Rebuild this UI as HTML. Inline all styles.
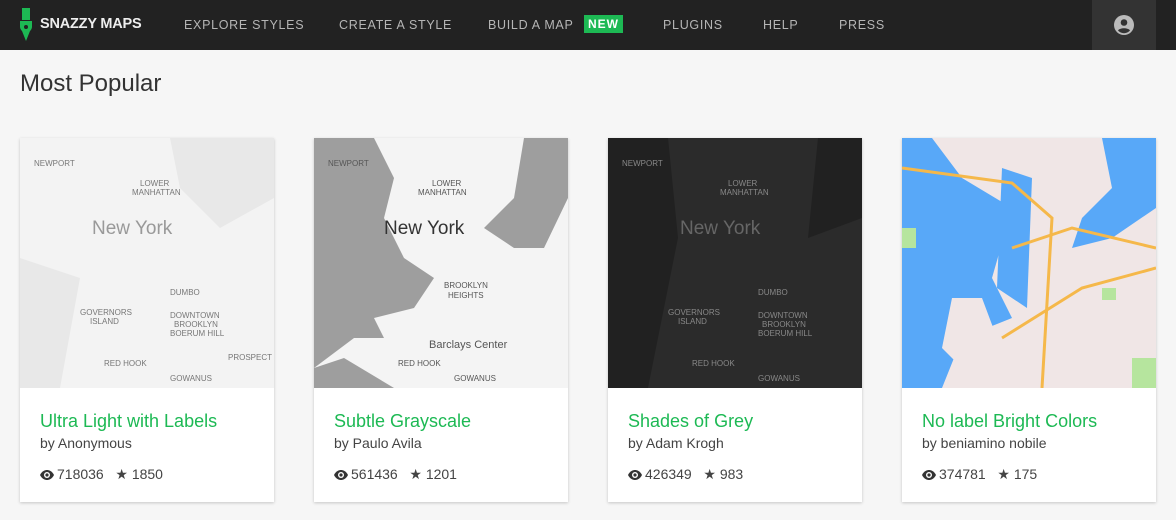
<!DOCTYPE html>
<html><head><style>
*{margin:0;padding:0;box-sizing:border-box}
body{width:1176px;height:520px;overflow:hidden;background:#f6f6f6;font-family:"Liberation Sans",sans-serif;position:relative}
.nav{position:absolute;left:0;top:0;width:1176px;height:50px;background:#222}
.nav span{position:absolute;top:18px;font-size:12.5px;letter-spacing:0.7px;color:#b5b5b5}
.logo{position:absolute;left:40px;top:16px;color:#eee;font-weight:bold;font-size:14.5px;letter-spacing:-0.2px}
.new{background:#1db954;color:#fff;font-weight:bold;padding:2px 4px;font-size:12px;position:absolute;left:584px;top:15px;letter-spacing:1px}
.acct{position:absolute;left:1092px;top:0;width:64px;height:50px;background:#333}
h1{position:absolute;left:20px;top:70px;font-weight:normal;font-size:24px;color:#333}
.card{position:absolute;top:138px;width:254px;height:364px;background:#fff;box-shadow:0 1px 3px rgba(0,0,0,.2)}
.card svg{display:block}
.t{position:absolute;left:20px;top:273px;font-size:18px;color:#1db954}
.b{position:absolute;left:20px;top:297px;font-size:14px;color:#444}
.s{position:absolute;left:20px;top:328px;font-size:14px;color:#444}
.s svg{display:inline-block;vertical-align:-1px;margin-right:3px}
</style></head><body>
<div class="nav">
<svg style="position:absolute;left:19px;top:8px" width="14" height="34" viewBox="0 0 14 34"><rect x="3" y="0" width="8" height="12" fill="#1db954"/><path d="M1 13h12v6a6 6 0 0 1-2 4L7 33 3 23a6 6 0 0 1-2-4z" fill="#1db954"/><circle cx="7" cy="19" r="2" fill="#222"/></svg>
<div class="logo">SNAZZY MAPS</div>
<span style="left:184px">EXPLORE STYLES</span>
<span style="left:339px">CREATE A STYLE</span>
<span style="left:488px">BUILD A MAP</span>
<div class="new">NEW</div>
<span style="left:663px">PLUGINS</span>
<span style="left:763px">HELP</span>
<span style="left:839px">PRESS</span>
<div class="acct"><svg style="position:absolute;left:22px;top:15px" width="20" height="20" viewBox="0 0 20 20"><circle cx="10" cy="10" r="10" fill="#bbb"/><circle cx="10" cy="7.5" r="3.3" fill="#333"/><path d="M4 15.5c1.5-3 10.5-3 12 0a8 8 0 0 1-12 0z" fill="#333"/></svg></div>
</div>
<h1>Most Popular</h1>

<div class="card" style="left:20px">
<svg width="254" height="250"><rect width="254" height="250" fill="#f3f3f3"/><path d="M0 120 L60 140 L40 250 L0 250Z M150 0 L254 0 L254 60 L200 90 L160 50Z" fill="#e8e8e8"/><text x="72" y="96" font-size="19" fill="#999" font-family="Liberation Sans">New York</text><g font-size="8" fill="#777" font-family="Liberation Sans"><text x="14" y="28">NEWPORT</text><text x="120" y="48">LOWER</text><text x="112" y="57">MANHATTAN</text><text x="150" y="157">DUMBO</text><text x="150" y="180">DOWNTOWN</text><text x="154" y="189">BROOKLYN</text><text x="60" y="177">GOVERNORS</text><text x="70" y="186">ISLAND</text><text x="150" y="198">BOERUM HILL</text><text x="84" y="228">RED HOOK</text><text x="208" y="222">PROSPECT</text><text x="150" y="243">GOWANUS</text></g></svg>
<div class="t">Ultra Light with Labels</div><div class="b">by Anonymous</div><div class="s"><svg width="14" height="10" viewBox="0 0 14 10"><path d="M0 5C2 1 5 0 7 0s5 1 7 5c-2 4-5 5-7 5S2 9 0 5z" fill="#333"/><circle cx="7" cy="5" r="3" fill="#fff"/><circle cx="7" cy="5" r="1.6" fill="#333"/></svg>718036 &nbsp;&nbsp;★ 1850</div></div>

<div class="card" style="left:314px">
<svg width="254" height="250"><rect width="254" height="250" fill="#f4f4f4"/><path d="M0 0 L60 0 L80 40 L70 80 L90 120 L120 140 L100 170 L60 180 L70 200 L40 200 L0 230Z" fill="#9e9e9e"/><path d="M0 250 L0 230 L30 220 L80 250Z" fill="#9e9e9e"/><path d="M210 0 L254 0 L254 60 L230 110 L200 110 L170 90 L200 60Z" fill="#9e9e9e"/><text x="70" y="96" font-size="19" fill="#333" font-family="Liberation Sans">New York</text><g font-size="8" fill="#555" font-family="Liberation Sans"><text x="14" y="28">NEWPORT</text><text x="118" y="48">LOWER</text><text x="104" y="57">MANHATTAN</text><text x="130" y="150">BROOKLYN</text><text x="134" y="160">HEIGHTS</text><text x="115" y="210" font-size="11">Barclays Center</text><text x="84" y="228">RED HOOK</text><text x="140" y="243">GOWANUS</text></g></svg>
<div class="t">Subtle Grayscale</div><div class="b">by Paulo Avila</div><div class="s"><svg width="14" height="10" viewBox="0 0 14 10"><path d="M0 5C2 1 5 0 7 0s5 1 7 5c-2 4-5 5-7 5S2 9 0 5z" fill="#333"/><circle cx="7" cy="5" r="3" fill="#fff"/><circle cx="7" cy="5" r="1.6" fill="#333"/></svg>561436 &nbsp;&nbsp;★ 1201</div></div>

<div class="card" style="left:608px">
<svg width="254" height="250"><rect width="254" height="250" fill="#2b2b2b"/><path d="M0 0 L60 0 L70 100 L40 250 L0 250Z M210 0 L254 0 L254 80 L200 100Z" fill="#212121"/><text x="72" y="96" font-size="19" fill="#666" font-family="Liberation Sans">New York</text><g font-size="8" fill="#888" font-family="Liberation Sans"><text x="14" y="28">NEWPORT</text><text x="120" y="48">LOWER</text><text x="112" y="57">MANHATTAN</text><text x="150" y="157">DUMBO</text><text x="150" y="180">DOWNTOWN</text><text x="154" y="189">BROOKLYN</text><text x="60" y="177">GOVERNORS</text><text x="70" y="186">ISLAND</text><text x="150" y="198">BOERUM HILL</text><text x="84" y="228">RED HOOK</text><text x="150" y="243">GOWANUS</text></g></svg>
<div class="t">Shades of Grey</div><div class="b">by Adam Krogh</div><div class="s"><svg width="14" height="10" viewBox="0 0 14 10"><path d="M0 5C2 1 5 0 7 0s5 1 7 5c-2 4-5 5-7 5S2 9 0 5z" fill="#333"/><circle cx="7" cy="5" r="3" fill="#fff"/><circle cx="7" cy="5" r="1.6" fill="#333"/></svg>426349 &nbsp;&nbsp;★ 983</div></div>

<div class="card" style="left:902px">
<svg width="254" height="250"><rect width="254" height="250" fill="#f0e6e6"/><path d="M0 0 L30 0 L60 40 L110 70 L90 140 L110 180 L60 200 L40 250 L0 250Z" fill="#58a8f8"/><path d="M200 0 L254 0 L254 70 L210 100 L170 110 L180 80 L210 50Z" fill="#58a8f8"/><path d="M100 30 L130 40 L125 170 L95 150Z" fill="#58a8f8"/><path d="M50 160 L80 160 L95 200 L60 230 L40 210Z" fill="#f0e6e6"/><g stroke="#f5b84a" stroke-width="3" fill="none"><path d="M0 30 L110 45 L150 80 L140 250"/><path d="M110 110 L170 90 L254 110"/><path d="M100 200 L180 150 L254 130"/></g><rect x="0" y="90" width="14" height="20" fill="#b6e59e"/><rect x="200" y="150" width="14" height="12" fill="#b6e59e"/><rect x="230" y="220" width="24" height="30" fill="#b6e59e"/></svg>
<div class="t">No label Bright Colors</div><div class="b">by beniamino nobile</div><div class="s"><svg width="14" height="10" viewBox="0 0 14 10"><path d="M0 5C2 1 5 0 7 0s5 1 7 5c-2 4-5 5-7 5S2 9 0 5z" fill="#333"/><circle cx="7" cy="5" r="3" fill="#fff"/><circle cx="7" cy="5" r="1.6" fill="#333"/></svg>374781 &nbsp;&nbsp;★ 175</div></div>
</body></html>
